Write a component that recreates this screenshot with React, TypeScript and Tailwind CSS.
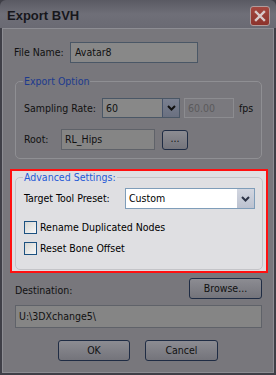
import React from "react";

const Chevron = ({ color }: { color: string }) => (
  <svg width="9" height="6" viewBox="0 0 9 6">
    <path d="M1 1 L4.5 4.5 L8 1" fill="none" stroke={color} strokeWidth="2" />
  </svg>
);

const DimButton = ({ label, className }: { label: string; className: string }) => (
  <div
    className={`flex items-center justify-center rounded-[3px] border border-[#1f2c44] bg-gradient-to-b from-[#8c8c92] to-[#74747b] text-[#111] ${className}`}
  >
    {label}
  </div>
);

export default function App() {
  return (
    <div className="w-[276px] h-[375px] bg-[#3f3f47] flex flex-col font-['DejaVu_Sans_Condensed','DejaVu_Sans',sans-serif] text-[10.5px] leading-[13px] text-[#111] overflow-hidden">
      {/* Title bar */}
      <div className="h-[28px] shrink-0 rounded-t-[6px] bg-gradient-to-b from-[#5a5a63] via-[#6f6f78] to-[#6a6a73] flex items-center pl-[7px] pr-[6px]">
        <div className="font-['Liberation_Sans',sans-serif] font-bold text-[13px] text-[#17171c] flex-1 pt-[2px]">
          Export BVH
        </div>
        <div className="w-[20px] h-[20px] mt-[3px] rounded-[3px] border border-[#b09c9c] bg-gradient-to-b from-[#a3473f] to-[#8c332c] flex items-center justify-center">
          <svg width="12" height="12" viewBox="0 0 12 12">
            <path d="M2 2 L10 10 M10 2 L2 10" stroke="#d8caca" strokeWidth="2.4" strokeLinecap="square" />
          </svg>
        </div>
      </div>

      {/* Body frame */}
      <div className="flex-1 border-x-[2px] border-b-[2px] border-[#3f3f47] flex flex-col">
        <div className="flex-1 border border-[#8d8d93] bg-[#78777c] flex flex-col px-[11px]">
          {/* File name */}
          <div className="flex items-center mt-[13px] h-[21px]">
            <div className="w-[56px]">File Name:</div>
            <div className="w-[128px] h-[21px] border border-[#4a5766] bg-[#888888] flex items-center pl-[4px]">
              Avatar8
            </div>
          </div>

          {/* Export Option */}
          <fieldset className="mt-[12px] mx-[1px] border border-[#8f8f93] rounded-[5px] pl-[8px] pr-[8px] pb-[8px]">
            <legend className="ml-[-1px] px-[1px] text-[#1d3a8e] leading-[13px]">Export Option</legend>
            <div className="flex items-center mt-[10px] h-[20px]">
              <div className="w-[78px]">Sampling Rate:</div>
              <div className="w-[78px] h-[20px] border border-[#4a5766] bg-[#888888] flex items-center">
                <div className="flex-1 pl-[3px]">60</div>
                <div className="w-[17px] h-[18px] border-l border-[#46536a] bg-gradient-to-b from-[#7a8090] to-[#6a7080] flex items-center justify-center">
                  <Chevron color="#111" />
                </div>
              </div>
              <div className="ml-[4px] w-[50px] h-[20px] border border-[#8c8c90] bg-[#7a797e] flex items-center pl-[3px] text-[#5a5a5c]">
                60.00
              </div>
              <div className="ml-[5px]">fps</div>
            </div>
            <div className="flex items-center mt-[11px] h-[21px]">
              <div className="w-[37px]">Root:</div>
              <div className="w-[94px] h-[21px] border border-[#5f6269] bg-[#858585] flex items-center pl-[3px]">
                RL_Hips
              </div>
              <DimButton label="..." className="ml-[7px] w-[26px] h-[20px] pb-[3px]" />
            </div>
          </fieldset>

          {/* Highlighted: Advanced Settings */}
          <div className="mt-[10px] ml-[-4px] mr-[-6px] border-2 border-[#ff1010] bg-[#dfdfe2] pl-[3px] pr-[3px] pb-[1px]">
            <fieldset className="border border-[#c4c4c8] rounded-[5px] pl-[8px] pr-[7px] pb-[14px]">
              <legend className="ml-[-1px] px-[1px] text-[#1f5ad6] leading-[13px]">Advanced Settings:</legend>
              <div className="flex items-center mt-[4px] h-[21px]">
                <div className="w-[101px] text-black">Target Tool Preset:</div>
                <div className="w-[130px] h-[21px] border border-[#7f9db9] bg-white flex items-center">
                  <div className="flex-1 pl-[3px] text-black">Custom</div>
                  <div className="w-[17px] h-[19px] bg-gradient-to-b from-[#d2d6e0] to-[#bcc2d0] flex items-center justify-center">
                    <Chevron color="#2c3447" />
                  </div>
                </div>
              </div>
              <div className="flex items-center mt-[12px] h-[13px]">
                <div className="w-[13px] h-[13px] border border-[#1c5180] bg-gradient-to-br from-[#d6d6d2] to-[#f8f8f8]" />
                <div className="ml-[3px] text-black">Rename Duplicated Nodes</div>
              </div>
              <div className="flex items-center mt-[8px] h-[13px]">
                <div className="w-[13px] h-[13px] border border-[#1c5180] bg-gradient-to-br from-[#d6d6d2] to-[#f8f8f8]" />
                <div className="ml-[3px] text-black">Reset Bone Offset</div>
              </div>
            </fieldset>
          </div>

          {/* Destination */}
          <div className="flex items-center mt-[5px] h-[21px] ml-[1px]">
            <div className="flex-1 pt-[3px]">Destination:</div>
            <DimButton label="Browse..." className="w-[73px] h-[21px]" />
          </div>
          <div className="mt-[6px] ml-[1px] h-[23px] border border-[#5f6269] bg-[#858585] flex items-center pl-[3px]">
            U:\3DXchange5\
          </div>

          {/* OK / Cancel */}
          <div className="flex justify-center gap-[15px] mt-[12px]">
            <DimButton label="OK" className="w-[72px] h-[21px]" />
            <DimButton label="Cancel" className="w-[73px] h-[21px]" />
          </div>
        </div>
      </div>
    </div>
  );
}
